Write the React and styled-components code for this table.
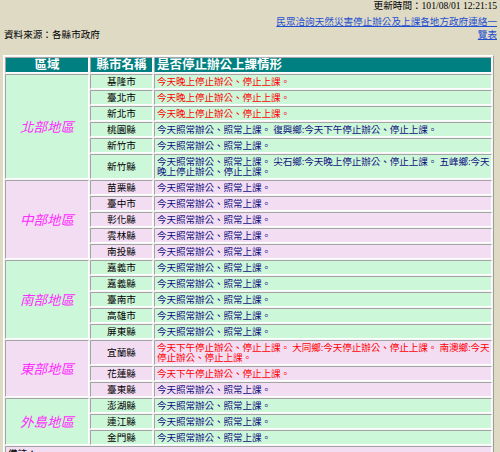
import React from 'react';
import styled, { createGlobalStyle } from 'styled-components';

const GlobalStyle = createGlobalStyle`
  html, body {
    margin: 0;
    padding: 0;
    background: #dedac4;
  }
  body {
    font-family: "Liberation Serif", "Noto Sans CJK TC", serif;
    font-size: 9.6px;
    color: #000;
  }
`;

const NORMAL = '今天照常辦公、照常上課。';
const EVENING = '今天晚上停止辦公、停止上課。';
const AFTERNOON = '今天下午停止辦公、停止上課。';

const regions = [
  {
    name: '北部地區',
    tone: 'green',
    rows: [
      { county: '基隆市', alert: true, lines: [EVENING] },
      { county: '臺北市', alert: true, lines: [EVENING] },
      { county: '新北市', alert: true, lines: [EVENING] },
      { county: '桃園縣', lines: [`${NORMAL} 復興鄉:今天下午停止辦公、停止上課。`] },
      { county: '新竹市', lines: [NORMAL] },
      {
        county: '新竹縣',
        lines: [`${NORMAL} 尖石鄉:今天晚上停止辦公、停止上課。 五峰鄉:今天`, '晚上停止辦公、停止上課。'],
      },
    ],
  },
  {
    name: '中部地區',
    tone: 'pink',
    rows: ['苗栗縣', '臺中市', '彰化縣', '雲林縣', '南投縣'].map((c) => ({ county: c, lines: [NORMAL] })),
  },
  {
    name: '南部地區',
    tone: 'green',
    rows: ['嘉義市', '嘉義縣', '臺南市', '高雄市', '屏東縣'].map((c) => ({ county: c, lines: [NORMAL] })),
  },
  {
    name: '東部地區',
    tone: 'pink',
    rows: [
      {
        county: '宜蘭縣',
        alert: true,
        lines: [`${AFTERNOON} 大同鄉:今天停止辦公、停止上課。 南澳鄉:今天`, '停止辦公、停止上課。'],
      },
      { county: '花蓮縣', alert: true, lines: [AFTERNOON] },
      { county: '臺東縣', lines: [NORMAL] },
    ],
  },
  {
    name: '外島地區',
    tone: 'green',
    rows: ['澎湖縣', '連江縣', '金門縣'].map((c) => ({ county: c, lines: [NORMAL] })),
  },
];

const tones = {
  green: '#cdf7d9',
  pink: '#f3ddf3',
};

const App = () => {
  return (
    <>
      <GlobalStyle />
      <Page>
        <Updated>更新時間：101/08/01 12:21:15</Updated>
        <InfoBar>
          <Source>資料來源：各縣市政府</Source>
          <ContactLink href="#">民眾洽詢天然災害停止辦公及上課各地方政府連絡一覽表</ContactLink>
        </InfoBar>
        <Table>
          <colgroup>
            <col style={{ width: 84 }} />
            <col style={{ width: 63 }} />
            <col />
          </colgroup>
          <thead>
            <tr>
              <HeadCell>區域</HeadCell>
              <HeadCell>縣市名稱</HeadCell>
              <HeadCell align="left">是否停止辦公上課情形</HeadCell>
            </tr>
          </thead>
          <tbody>
            {regions.map((region) =>
              region.rows.map((row, i) => (
                <Row key={row.county} tone={tones[region.tone]}>
                  {i === 0 && (
                    <RegionCell rowSpan={region.rows.length}>{region.name}</RegionCell>
                  )}
                  <CountyCell>{row.county}</CountyCell>
                  <StatusCell alert={row.alert ? 1 : 0}>
                    {row.lines.map((line, j) => (
                      <Line key={j}>{line}</Line>
                    ))}
                  </StatusCell>
                </Row>
              ))
            )}
            <Row tone={tones.pink}>
              <NoteCell colSpan={3}>備註：</NoteCell>
            </Row>
          </tbody>
        </Table>
      </Page>
    </>
  );
};

export default App;

const Page = styled.div`
  width: 494px;
  padding: 0 0 20px 3px;
`;

const Updated = styled.div`
  text-align: right;
  line-height: 12px;
  height: 12px;
`;

const InfoBar = styled.div`
  display: flex;
  justify-content: space-between;
  align-items: flex-end;
  margin-top: 3px;
`;

const Source = styled.div`
  padding-left: 1px;
  line-height: 13px;
`;

const ContactLink = styled.a`
  width: 226px;
  text-align: right;
  line-height: 13px;
  color: #1f4fd0;
  text-decoration: underline;
`;

const Table = styled.table`
  margin-top: 14px;
  width: 491px;
  table-layout: fixed;
  border-collapse: separate;
  border-spacing: 1px;
  border: 1px solid;
  border-color: #ffffff #9c9c9c #9c9c9c #ffffff;
  background: #f4f4f4;
`;

const Row = styled.tr`
  background: ${({ tone }) => tone};
`;

const Cell = styled.td`
  border: 1px solid;
  border-color: #a4a4a4 #ffffff #ffffff #a4a4a4;
  padding: 2px 2px 1px;
  line-height: 10px;
  vertical-align: middle;
`;

const HeadCell = styled.th`
  background: #008080;
  color: #ffffff;
  font-size: 12.5px;
  font-weight: bold;
  line-height: 14px;
  padding: 0 2px;
  text-align: ${({ align }) => align || 'center'};
  border: 1px solid;
  border-color: #a4a4a4 #ffffff #ffffff #a4a4a4;
`;

const RegionCell = styled(Cell)`
  text-align: center;
  color: #ff2cff;
  font-style: italic;
  font-size: 13.5px;
  line-height: 15px;
`;

const CountyCell = styled(Cell)`
  text-align: center;
`;

const StatusCell = styled(Cell)`
  color: ${({ alert }) => (alert ? '#ff0000' : '#101080')};
  letter-spacing: -0.1px;
`;

const Line = styled.div`
  white-space: nowrap;
`;

const NoteCell = styled(Cell)`
  height: 40px;
  vertical-align: top;
`;
